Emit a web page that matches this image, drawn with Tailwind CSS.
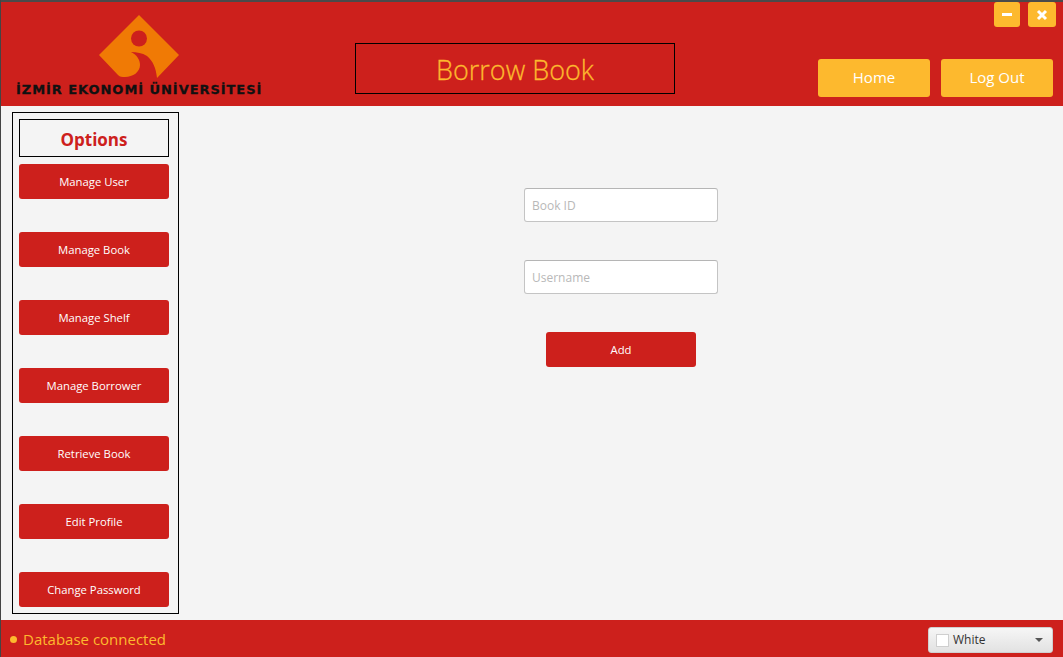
<!DOCTYPE html>
<html lang="en">
<head>
    <meta charset="UTF-8">
    <title>Borrow Book</title>
    <script src="https://cdn.jsdelivr.net/npm/@tailwindcss/browser@4"></script>
</head>
<body class="bg-[#f4f4f4] font-['Open_Sans',sans-serif]">
<div class="w-[1063px] h-[657px] flex flex-col overflow-hidden border-l border-l-[#444444]">
    <div class="h-[2px] bg-[#4a4a4a] shrink-0"></div>

    <!-- Header -->
    <header class="bg-[#cd201c] h-[104px] shrink-0 flex">
        <div class="w-[354px] shrink-0 pl-[15px] pt-[13px]">
            <svg class="ml-[83px] block" width="82" height="66" viewBox="99 15 82 66">
                <path fill="#f07a05" d="M139 15 L179 55 L157 78 C156 68 153 61 147 56 C142 53 137 52 131 52 C137 55 140 60 140 65 C140 72 133 77 125 77 C122 77 120 77 118 75 L99 55 Z"/>
                <circle cx="139" cy="38.500" r="8" fill="#cd201c"/>
            </svg>
            <div class="font-['DejaVu_Sans',sans-serif] font-bold text-[13px] leading-[12px] mt-[3px] tracking-[0.95px] text-[#111111] [-webkit-text-stroke:0.3px_#111111] whitespace-nowrap">İZMİR EKONOMİ ÜNİVERSİTESİ</div>
        </div>
        <div class="w-[320px] h-[51px] mt-[41px] pt-[3px] border border-black flex items-center justify-center text-[27px] font-light text-[#fdb92e] [-webkit-text-stroke:0.3px_#fdb92e] shrink-0">Borrow Book</div>
        <div class="flex-1 flex flex-col items-end">
            <div class="flex gap-[8px] pr-[7px]">
                <button class="w-[26px] h-[25px] bg-[#fdb92e] rounded-[3px] flex items-center justify-center">
                    <span class="block w-[10px] h-[3px] bg-white"></span>
                </button>
                <button class="w-[28px] h-[25px] bg-[#fdb92e] rounded-[3px] flex items-center justify-center">
                    <svg width="12" height="12" viewBox="0 0 12 12"><path d="M2 2 L10 10 M10 2 L2 10" stroke="#fff" stroke-width="3"/></svg>
                </button>
            </div>
            <div class="flex gap-[11px] pr-[10px] mt-[32px]">
                <button class="w-[112px] h-[38px] bg-[#fdb92e] rounded-[3px] text-white text-[15px] pb-[2px]">Home</button>
                <button class="w-[112px] h-[38px] bg-[#fdb92e] rounded-[3px] text-white text-[15px] pb-[2px]">Log Out</button>
            </div>
        </div>
    </header>

    <!-- Content -->
    <div class="flex-1 flex">
        <aside class="w-[167px] h-[502px] ml-[11px] mt-[6px] border border-black shrink-0 pt-[6px] pl-[6px] pr-[9px] flex flex-col">
            <div class="h-[38px] border border-black flex items-center justify-center text-[17px] font-bold text-[#cd201c] pt-[3px]">Options</div>
            <div class="flex flex-col gap-[33px] mt-[7px]">
                <button class="h-[35px] bg-[#cd201c] rounded-[3px] text-white text-[11.300px] pt-[1px]">Manage User</button>
                <button class="h-[35px] bg-[#cd201c] rounded-[3px] text-white text-[11.300px] pt-[1px]">Manage Book</button>
                <button class="h-[35px] bg-[#cd201c] rounded-[3px] text-white text-[11.300px] pt-[1px]">Manage Shelf</button>
                <button class="h-[35px] bg-[#cd201c] rounded-[3px] text-white text-[11.300px] pt-[1px]">Manage Borrower</button>
                <button class="h-[35px] bg-[#cd201c] rounded-[3px] text-white text-[11.300px] pt-[1px]">Retrieve Book</button>
                <button class="h-[35px] bg-[#cd201c] rounded-[3px] text-white text-[11.300px] pt-[1px]">Edit Profile</button>
                <button class="h-[35px] bg-[#cd201c] rounded-[3px] text-white text-[11.300px] pt-[1px]">Change Password</button>
            </div>
        </aside>
        <main class="w-[884px] shrink-0 flex flex-col items-center pt-[82px]">
            <input type="text" placeholder="Book ID" class="w-[194px] h-[34px] bg-white border border-[#c4c4c4] border-t-[#b5b5b5] rounded-[3px] px-[7px] text-[12px] placeholder:text-[#b8b8b8]">
            <input type="text" placeholder="Username" class="w-[194px] h-[34px] bg-white border border-[#c4c4c4] border-t-[#b5b5b5] rounded-[3px] px-[7px] text-[12px] mt-[38px] placeholder:text-[#b8b8b8]">
            <button class="w-[150px] h-[35px] bg-[#cd201c] rounded-[3px] text-white text-[11.300px] pt-[1px] mt-[38px]">Add</button>
        </main>
    </div>

    <!-- Footer -->
    <footer class="bg-[#cd201c] h-[37px] shrink-0 flex items-center justify-between pl-[9px] pr-[10px]">
        <div class="flex items-center gap-[6px] text-[#fdb92e] text-[15px] pt-[1px]">
            <span class="block w-[7px] h-[7px] rounded-full bg-[#fdb92e]"></span>
            <span>Database connected</span>
        </div>
        <div class="w-[125px] h-[26px] rounded-[3px] border border-[#d0d0d0] bg-gradient-to-b from-[#f6f6f6] to-[#e2e2e2] flex items-center pl-[7px] pr-[9px] mt-[3px]">
            <span class="block w-[13px] h-[13px] bg-white border border-[#cfcfcf]"></span>
            <span class="ml-[4px] text-[12px] text-[#333333] flex-1">White</span>
            <span class="block w-0 h-0 border-l-[4px] border-r-[4px] border-t-[4px] border-l-transparent border-r-transparent border-t-[#555555]"></span>
        </div>
    </footer>
</div>
</body>
</html>
